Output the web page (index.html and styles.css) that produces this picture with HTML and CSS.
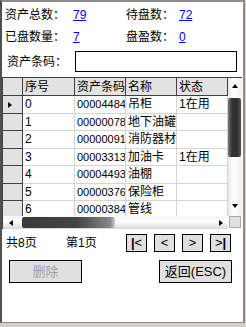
FILE: index.html
```html
<!DOCTYPE html>
<html>
<head>
    <title>资产盘点</title>
    <link rel="stylesheet" href="styles.css">
</head>
<body>
    <div class="window">
        <div class="stats">
            <span>资产总数：</span><a class="num" href="#">79</a>
            <span>待盘数：</span><a class="num" href="#">72</a>
            <span>已盘数量：</span><a class="num" href="#">7</a>
            <span>盘盈数：</span><a class="num" href="#">0</a>
        </div>

        <div class="barcode">
            <label class="barcode-label" for="code">资产条码：</label>
            <input id="code" class="barcode-input" type="text">
        </div>

        <!-- data grid with its own scroll bars -->
        <div class="grid">
            <div class="grid-main">
                <div class="table-view">
                    <table class="data">
                        <colgroup>
                            <col style="width: 20px">
                            <col style="width: 52px">
                            <col style="width: 51px">
                            <col style="width: 51px">
                            <col style="width: 51px">
                        </colgroup>
                        <tr class="head">
                            <th class="rowhead"></th>
                            <th>序号</th>
                            <th>资产条码</th>
                            <th>名称</th>
                            <th>状态</th>
                        </tr>
                        <tr>
                            <td class="rowhead"><span class="current"></span></td>
                            <td>0</td><td class="code">00004484</td><td>吊柜</td><td>1在用</td>
                        </tr>
                        <tr>
                            <td class="rowhead"></td>
                            <td>1</td><td class="code">00000078</td><td>地下油罐</td><td></td>
                        </tr>
                        <tr>
                            <td class="rowhead"></td>
                            <td>2</td><td class="code">00000091</td><td>消防器材</td><td></td>
                        </tr>
                        <tr>
                            <td class="rowhead"></td>
                            <td>3</td><td class="code">00003313</td><td>加油卡</td><td>1在用</td>
                        </tr>
                        <tr>
                            <td class="rowhead"></td>
                            <td>4</td><td class="code">00004493</td><td>油棚</td><td></td>
                        </tr>
                        <tr>
                            <td class="rowhead"></td>
                            <td>5</td><td class="code">00000376</td><td>保险柜</td><td></td>
                        </tr>
                        <tr>
                            <td class="rowhead"></td>
                            <td>6</td><td class="code">00000384</td><td>管线</td><td></td>
                        </tr>
                    </table>
                </div>
                <div class="vscroll">
                    <div class="sb-btn"><span class="arrow up"></span></div>
                    <div class="vtrack"><div class="vthumb"></div></div>
                    <div class="sb-btn sb-down"><span class="arrow down"></span></div>
                </div>
            </div>
            <div class="grid-foot">
                <div class="hscroll">
                    <div class="sb-btn sb-side"><span class="arrow left"></span></div>
                    <div class="htrack"><div class="hthumb"></div></div>
                    <div class="sb-btn sb-side"><span class="arrow right"></span></div>
                </div>
                <div class="corner"></div>
            </div>
        </div>

        <div class="pager">
            <span class="page-info">共8页</span>
            <span class="page-info">第1页</span>
            <button class="page-btn"><b>|</b>&lt;</button>
            <button class="page-btn">&lt;</button>
            <button class="page-btn">&gt;</button>
            <button class="page-btn">&gt;<b>|</b></button>
        </div>

        <div class="actions">
            <button class="act-btn" disabled>删除</button>
            <button class="act-btn">返回(ESC)</button>
        </div>
    </div>
</body>
</html>
```

FILE: styles.css
```css
html, body {
    margin: 0;
}

body {
    background-color: #d4d0c8;
    font-family: "Liberation Sans", "Noto Sans CJK SC", sans-serif;
    font-size: 12px;
    line-height: 14px;
    color: #000;
}

/* window frame */
.window {
    width: 245px;
    height: 323px;
    box-sizing: border-box;
    background-color: #fff;
    border-top: 2px solid #8c8c8c;
    border-left: 2px solid #505050;
    border-right: 2px solid #8c8c8c;
    border-bottom: 1px solid #8c8c8c;
}

/* counters at the top */
.stats {
    display: grid;
    grid-template-columns: 68px 53px 53px 1fr;
    grid-auto-rows: 22px;
    align-items: center;
    padding: 2px 0 0 3px;
}

.num {
    color: #0000ff;
    text-decoration: underline;
}

.barcode {
    display: flex;
    align-items: center;
    margin-top: 3px;
    padding-left: 5px;
}

.barcode-label {
    width: 68px;
}

.barcode-input {
    width: 162px;
    height: 21px;
    box-sizing: border-box;
    margin: 0;
    padding: 0 2px;
    border: 1px solid #000;
    font: inherit;
    outline: none;
}

/* CSS for the grid */
.grid {
    width: 240px;
    margin-top: 5px;
    box-sizing: border-box;
    border-top: 1px solid #404040;
    border-left: 1px solid #404040;
}

.grid-main {
    display: flex;
    height: 138px;
}

.table-view {
    width: 225px;
    overflow: hidden;
}

.data {
    width: 225px;
    table-layout: fixed;
    border-collapse: separate;
    border-spacing: 0;
}

.data tr {
    height: 17.5px;
}

.data tr.head {
    height: 18px;
}

.data th, .data td {
    padding: 0 0 0 2px;
    text-align: left;
    font-weight: normal;
    white-space: nowrap;
    overflow: hidden;
}

.data td {
    border-right: 1px solid #d4d4d4;
    border-bottom: 1px solid #d4d4d4;
}

.data td.code {
    font-size: 11px;
}

.data th {
    background-color: #e2e2e2;
    border-right: 1px solid #404040;
    border-bottom: 1px solid #404040;
}

.data .rowhead {
    padding-left: 5px;
    background-color: #e2e2e2;
    border-right: 1px solid #404040;
    border-bottom: 1px solid #404040;
}

.current {
    display: inline-block;
    vertical-align: middle;
    border-left: 4px solid #000;
    border-top: 3.5px solid transparent;
    border-bottom: 3.5px solid transparent;
}

/* scroll bars */
.vscroll {
    width: 14px;
    display: flex;
    flex-direction: column;
    background: linear-gradient(to right, #e8e8e8, #fff 40%, #f0f0f0);
}

.sb-btn {
    flex: none;
    height: 15px;
    display: flex;
    align-items: center;
    justify-content: center;
}

.sb-down {
    margin-bottom: 3px;
}

.vtrack {
    flex: 1;
}

.vthumb {
    height: 59px;
    margin: 5px 1px 0 0;
    border-radius: 2px;
    background: linear-gradient(to right, #7a7a7a, #343434 30%, #2e2e2e 70%, #5a5a5a);
}

.arrow {
    width: 0;
    height: 0;
}

.arrow.up {
    border-left: 3px solid transparent;
    border-right: 3px solid transparent;
    border-bottom: 4px solid #000;
}

.arrow.down {
    border-left: 3px solid transparent;
    border-right: 3px solid transparent;
    border-top: 4px solid #000;
}

.arrow.left {
    border-top: 3px solid transparent;
    border-bottom: 3px solid transparent;
    border-right: 4px solid #000;
}

.arrow.right {
    border-top: 3px solid transparent;
    border-bottom: 3px solid transparent;
    border-left: 4px solid #000;
}

.grid-foot {
    display: flex;
    height: 13px;
}

.hscroll {
    width: 225px;
    display: flex;
    background: linear-gradient(to bottom, #f6f6f6, #fff 40%, #d8d8d8);
}

.sb-side {
    width: 15px;
    height: 13px;
}

.htrack {
    flex: 1;
}

.hthumb {
    width: 93px;
    height: 11px;
    margin: 1px 0 0 4px;
    border-radius: 2px;
    background: linear-gradient(to right, #3a3a3a, #444 60%, #8a8a8a 95%, #ccc);
}

.corner {
    width: 12px;
    height: 12px;
    margin-left: 1px;
    box-sizing: border-box;
    background-color: #e0e0e0;
    border: 1px solid #a8a8a8;
}

/* paging */
.pager {
    display: flex;
    align-items: center;
    height: 18px;
    margin-top: 5px;
    padding-left: 4px;
}

.page-info {
    width: 60px;
}

.page-btn {
    width: 21px;
    height: 18px;
    box-sizing: border-box;
    margin: 0;
    padding: 0;
    border: 1px solid #000;
    background-color: #e0e0e0;
    font-family: "Liberation Sans", sans-serif;
    font-size: 13px;
    line-height: 14px;
}

.page-btn + .page-btn {
    margin-left: 7px;
}

.actions {
    display: flex;
    justify-content: space-between;
    margin-top: 8px;
    padding: 0 11px 0 7px;
}

.act-btn {
    width: 73px;
    height: 23px;
    box-sizing: border-box;
    margin: 0;
    padding: 0;
    border: 1px solid #000;
    background-color: #e0e0e0;
    font: inherit;
    font-size: 13px;
    color: #000;
}

.act-btn:disabled {
    color: #a0a0a0;
}
```
